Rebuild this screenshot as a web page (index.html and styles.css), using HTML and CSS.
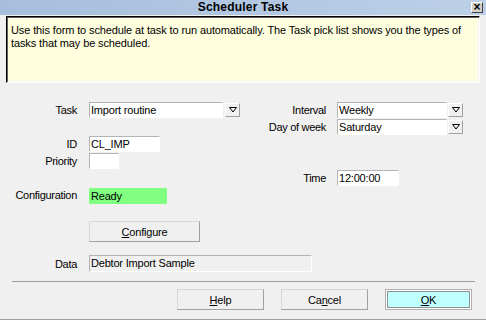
FILE: index.html
```html
<!DOCTYPE html>
<html>
<head>
<meta charset="utf-8">
<link rel="stylesheet" href="styles.css">
</head>
<body>
<div class="window">
  <div class="titlebar">
    <span></span>
    <span class="title">Scheduler Task</span>
    <span class="close">×</span>
  </div>
  <div class="info">Use this form to schedule at task to run automatically. The Task pick list shows you the types of tasks that may be scheduled.</div>

  <div class="form">
    <label class="lbl r1 c1">Task</label>
    <div class="combo r1 c2 w-task"><span class="field">Import routine</span><span class="drop"><svg width="8" height="6" viewBox="0 0 8 6"><path d="M0.5 0.5 H7.5 L4 5 Z" fill="none" stroke="#000" stroke-width="1"/></svg></span></div>

    <label class="lbl r1 c3">Interval</label>
    <div class="combo r1 c4 w-int"><span class="field">Weekly</span><span class="drop"><svg width="8" height="6" viewBox="0 0 8 6"><path d="M0.5 0.5 H7.5 L4 5 Z" fill="none" stroke="#000" stroke-width="1"/></svg></span></div>

    <label class="lbl r2 c3">Day of week</label>
    <div class="combo r2 c4 w-int"><span class="field">Saturday</span><span class="drop"><svg width="8" height="6" viewBox="0 0 8 6"><path d="M0.5 0.5 H7.5 L4 5 Z" fill="none" stroke="#000" stroke-width="1"/></svg></span></div>

    <label class="lbl r3 c1">ID</label>
    <span class="field r3 c2 w-id">CL_IMP</span>

    <label class="lbl r4 c1">Priority</label>
    <span class="field r4 c2 w-pri"></span>

    <label class="lbl r5 c3">Time</label>
    <span class="field r5 c4 w-time">12:00:00</span>

    <label class="lbl r6 c1">Configuration</label>
    <span class="field r6 c2 w-conf ready">Ready</span>
  </div>

  <div class="configure-row">
    <button class="btn btn-config"><u>C</u>onfigure</button>
  </div>

  <div class="data-row">
    <label class="lbl">Data</label>
    <span class="field readonly">Debtor Import Sample</span>
  </div>

  <div class="sep"></div>

  <div class="buttons">
    <button class="btn"><u>H</u>elp</button>
    <button class="btn">Ca<u>n</u>cel</button>
    <button class="btn btn-ok"><u>O</u>K</button>
  </div>
</div>
</body>
</html>
```

FILE: styles.css
```css
html, body {
  margin: 0;
  padding: 0;
  background: #f0f0f0;
}

body {
  font-family: "Liberation Sans", Arial, sans-serif;
  font-size: 11px;
  color: #000;
}

.window {
  width: 486px;
  height: 320px;
  box-sizing: border-box;
  background: #f0f0f0;
  border-bottom: 1px solid #a0a0a0;
  overflow: hidden;
}

.titlebar {
  height: 15px;
  display: grid;
  grid-template-columns: 1fr auto 1fr;
  align-items: center;
  background: linear-gradient(to right, #a6bedc, #bcd0e8);
}

.title {
  font-weight: bold;
  font-size: 12px;
  letter-spacing: 0.2px;
  line-height: 15px;
}

.close {
  justify-self: end;
  margin-right: 3px;
  width: 12px;
  height: 11px;
  box-sizing: border-box;
  background: #d4d0c8;
  border: 1px solid;
  border-color: #fff #404040 #404040 #fff;
  font-size: 12px;
  line-height: 8px;
  text-align: center;
  font-weight: bold;
}

.info {
  margin: 1px 6px 0 6px;
  height: 67px;
  box-sizing: border-box;
  background: #ffffdf;
  border: 1px solid;
  border-color: #000 #fff #fff #000;
  box-shadow: inset 1px 1px 0 #606060, inset -1px -1px 0 #f4f4f4;
  padding: 7px 4px 0 4px;
  line-height: 13px;
  letter-spacing: -0.12px;
}

.form {
  margin-top: 19px;
  display: grid;
  grid-template-columns: 89px 160px 88px 1fr;
  grid-template-rows: repeat(6, 17px);
  align-items: start;
}

.r1 { grid-row: 1; }
.r2 { grid-row: 2; }
.r3 { grid-row: 3; }
.r4 { grid-row: 4; }
.r5 { grid-row: 5; }
.r6 { grid-row: 6; }
.c1 { grid-column: 1; }
.c2 { grid-column: 2; }
.c3 { grid-column: 3; }
.c4 { grid-column: 4; }

.lbl {
  text-align: right;
  line-height: 16px;
  letter-spacing: -0.3px;
}

.c1.lbl { padding-right: 12px; }
.c3.lbl { padding-right: 11px; }

.field {
  display: block;
  height: 16px;
  box-sizing: border-box;
  background: #fff;
  border: 1px solid;
  border-color: #b4b4b4 #fff #fff #b4b4b4;
  padding-left: 1px;
  line-height: 14px;
  letter-spacing: -0.2px;
  white-space: nowrap;
  overflow: hidden;
}

.combo {
  display: flex;
  align-items: flex-start;
}

.w-task .field { width: 134px; }
.w-task .drop { margin-left: 2px; }
.w-int .field { width: 110px; }
.w-int .drop { margin-left: 1px; }

.drop {
  width: 15px;
  height: 14px;
  margin-top: 1px;
  box-sizing: border-box;
  border: 1px solid;
  border-color: #fff #a0a0a0 #a0a0a0 #fff;
  background: #f0f0f0;
  display: flex;
  align-items: center;
  justify-content: center;
}

.w-id { width: 71px; }
.w-pri { width: 30px; }
.w-time { width: 62px; }
.w-conf { width: 78px; margin-top: 1px; }

.ready {
  background: #80ff80;
  border-color: #80ff80;
}

.configure-row {
  margin-top: 17px;
  padding-left: 89px;
}

.btn {
  display: block;
  height: 21px;
  width: 87px;
  box-sizing: border-box;
  background: #f0f0f0;
  border: 1px solid;
  border-color: #d8d8d8 #a0a0a0 #a0a0a0 #d8d8d8;
  font-family: "Liberation Sans", Arial, sans-serif;
  font-size: 11px;
  color: #000;
  padding: 0;
  letter-spacing: -0.2px;
  line-height: 18px;
  text-align: center;
}

.btn-config {
  width: 111px;
}

.data-row {
  margin-top: 13px;
  display: flex;
  align-items: center;
}

.data-row .lbl {
  width: 89px;
  box-sizing: border-box;
  padding-right: 12px;
}

.readonly {
  width: 223px;
  height: 17px;
  background: #f0f0f0;
  line-height: 15px;
}

.sep {
  margin: 9px 11px 0 12px;
  height: 1px;
  background: #a0a0a0;
}

.buttons {
  margin-top: 7px;
  display: flex;
  justify-content: flex-end;
  gap: 17px;
  padding-right: 14px;
}

.btn-ok {
  background: #c0ffff;
  border-color: #b0b0b0;
  box-shadow: inset 0 0 0 1px #fff, inset 0 0 0 2px #909090;
}
```
